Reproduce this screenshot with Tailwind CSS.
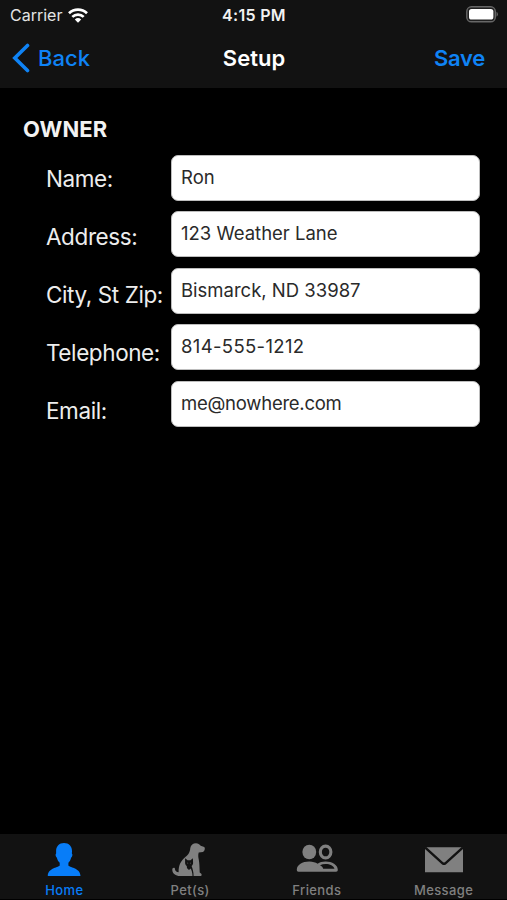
<!DOCTYPE html>
<html lang="en">
<head>
  <meta charset="UTF-8" />
  <meta name="viewport" content="width=device-width, initial-scale=1.0" />
  <title>Setup</title>
  <script src="https://cdn.jsdelivr.net/npm/@tailwindcss/browser@4"></script>
  <style>
    body {
      font-family: 'Inter', sans-serif;
    }
  </style>
</head>

<body class="bg-black text-white h-[900px] w-[507px] flex flex-col overflow-hidden">

  <header class="h-[88px] shrink-0 bg-[#121212]">
    <!-- Status bar -->
    <div class="h-[30px] grid grid-cols-3 items-center pl-[10px] pr-[9px]">
      <div class="flex items-center gap-[6px]">
        <span class="text-[16px] text-[#e4e4e4]">Carrier</span>
        <svg class="w-[20px] h-[15px]" viewBox="0 0 20 15" fill="none" stroke="#fff" stroke-width="2.7">
          <path d="M1 5.3a13 13 0 0 1 18 0" />
          <path d="M4.300 8.900a8.200 8.200 0 0 1 11.400 0" />
          <path d="M10 14.800l-3.200-3.200a4.700 4.700 0 0 1 6.400 0z" fill="#fff" stroke="none" />
        </svg>
      </div>
      <span class="text-center text-[16px] font-semibold tracking-[0.3px] whitespace-nowrap text-[#f2f2f2]">4:15 PM</span>
      <svg class="w-[33px] h-[17px] justify-self-end -mt-px" viewBox="0 0 33 17">
        <rect x="1.800" y="0.800" width="28.500" height="15" rx="4.600" fill="#202020" stroke="#676767" stroke-width="1.400" />
        <rect x="4" y="3" width="24.400" height="10.600" rx="2.600" fill="#fff" />
        <path d="M31.500 5.800q1.400.8 1.400 2.500t-1.400 2.500z" fill="#676767" />
      </svg>
    </div>

    <!-- Navigation bar -->
    <nav class="h-[56px] grid grid-cols-3 items-center pl-[12px] pr-[22px] text-[22px]">
      <button class="flex items-center gap-[8px] text-[#0f83f5] font-medium">
        <svg class="w-[18px] h-[30px]" viewBox="0 0 18 30" fill="none" stroke="currentColor" stroke-width="3.6" stroke-linecap="round">
          <path d="M15.500 2.500L2.800 15l12.700 12.500" />
        </svg>
        Back
      </button>
      <h1 class="text-center font-semibold pl-[11px]">Setup</h1>
      <button class="justify-self-end text-[#0f83f5] font-semibold tracking-[-0.25px]">Save</button>
    </nav>
  </header>

  <main class="flex-1 pt-[25px]">
    <h2 class="pl-[23px] text-[22px] leading-[32px] font-bold tracking-[0.1px] text-[#f2f2f2]">OWNER</h2>
    <div class="flex pl-[46px] pt-[9.5px]">
      <div class="w-[125px] shrink-0 text-[22.5px] leading-[58px] tracking-[-0.4px] -mt-[4.5px] whitespace-nowrap text-[#ededed]">
        <div>Name:</div>
        <div>Address:</div>
        <div>City, St Zip:</div>
        <div>Telephone:</div>
        <div>Email:</div>
      </div>
      <div class="w-[309px] flex flex-col gap-[10.6px] text-[18.5px] text-[#2a2a2a]">
        <div class="h-[46px] rounded-[7px] bg-white border border-[#bdbdbd] pl-[9px] leading-[43px]">Ron</div>
        <div class="h-[46px] rounded-[7px] bg-white border border-[#bdbdbd] pl-[9px] leading-[43px]">123 Weather Lane</div>
        <div class="h-[46px] rounded-[7px] bg-white border border-[#bdbdbd] pl-[9px] leading-[43px]">Bismarck, ND 33987</div>
        <div class="h-[46px] rounded-[7px] bg-white border border-[#bdbdbd] pl-[9px] leading-[43px] tracking-[0.35px]">814-555-1212</div>
        <div class="h-[46px] rounded-[7px] bg-white border border-[#bdbdbd] pl-[9px] leading-[43px] tracking-[-0.25px]">me@nowhere.com</div>
      </div>
    </div>
  </main>

  <!-- Tab bar -->
  <footer class="h-[66px] shrink-0 bg-[#121212] border-b border-black grid grid-cols-4 pt-[6px] text-[13px] leading-[16px] font-medium tracking-[0.4px] text-[#808080]">
    <a class="flex flex-col items-center gap-[3px] pl-[2px] text-[#087df8]">
      <svg class="w-[42px] h-[39px]" viewBox="0 0 42 39" fill="currentColor">
        <path d="M21 3c5 0 8 3.400 8 8 0 1.300-.1 2-.1 2.400 1 .6.5 3.100-.8 4.300-.5 2.300-1.500 3.900-2.700 5v2.600c0 2.300 12.100 2.300 12.100 10.700H4.800c0-8.400 11.900-8.400 11.900-10.700v-2.600c-1.300-1.100-2.300-2.700-2.800-5-1.300-1.200-1.800-3.700-.8-4.300V11c0-4.600 3-8 7.900-8z" />
      </svg>
      Home
    </a>
    <a class="flex flex-col items-center gap-[3px]">
      <svg class="w-[42px] h-[39px]" viewBox="0 0 42 39" fill="currentColor">
        <!-- dog -->
        <path d="M21.300 8c.5-2.900 2.700-4.700 5.700-4.700 2.100 0 3.400 1 4.700 2.400l3.500 1.400c1.200.8.6 4.300-1.300 4.900l-4.200.5c-.7 2.600-.5 4.500.1 7.300.6 3 .7 7.500.9 12.700l1.600 1.300c.5.600.4 1.800-.2 2.200H11c-4.300 0-7.600-2.500-7.700-6-.1-1.700.8-2.600 1.900-2.300.9.300.7 1.300.9 2.100.4 1.500 1.600 2.300 3.500 2.400 0-7.200 2.200-11 6-14.400 2.900-2.500 5.400-4.600 5.700-9.800z" />
        <!-- cat -->
        <path fill="#121212" d="M16.100 18.300l2.500 2h2.900l2.400-2 .2 4.800c-.1 1.500-.7 2.300-1.500 2.900.9 2.700 2.100 5.800 2 10h-1.100c0-3-.8-5.400-1.900-7.400l-1.600 1.500-1.700-1.500c-.5-.9-.6-1.800-.5-2.600-1-.6-1.600-1.500-1.700-2.900z" />
        <path d="M18.100 22.600l1.300.7-.9.300zm4 0l-1.300.7.9.3z" />
      </svg>
      Pet(s)
    </a>
    <a class="flex flex-col items-center gap-[3px]">
      <svg class="w-[42px] h-[39px]" viewBox="0 0 42 39" fill="currentColor">
        <ellipse cx="13.300" cy="12" rx="6.900" ry="7.300" />
        <ellipse cx="29.600" cy="12" rx="5.300" ry="5.900" fill="none" stroke="currentColor" stroke-width="3.100" />
        <path d="M.8 29.500c.2-4.400 5.500-7.900 12.500-7.900 3.600 0 6.300 1 8.300 2.100 2.100-1.200 4.700-2.100 8-2.100 6.600 0 11.900 3.500 12.200 7.900 0 1.500-.5 2.200-1.800 2.200H2.600C1.300 31.700.8 31 .8 29.500z" />
        <path fill="#121212" d="M24 25.200c1.700-.8 3.500-1.200 5.600-1.200 4.400 0 8 1.900 8.900 4.700H27.200c-.3-1.400-1.500-2.600-3.200-3.500z" />
      </svg>
      Friends
    </a>
    <a class="flex flex-col items-center gap-[3px]">
      <svg class="w-[42px] h-[39px]" viewBox="0 0 42 39" fill="currentColor">
        <path d="M2 7.300h38v24.900H2z" />
        <path d="M2 7.300l17.600 16q1.400 1.100 2.800 0L40 7.300" fill="none" stroke="#121212" stroke-width="2.400" />
      </svg>
      Message
    </a>
  </footer>

</body>
</html>
